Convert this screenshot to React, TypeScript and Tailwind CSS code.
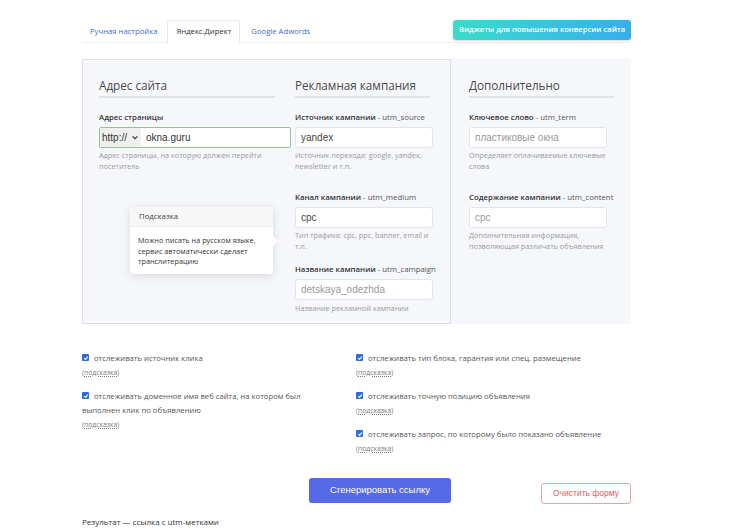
import React from "react";

const Check = () => (
  <span className="inline-flex items-center justify-center w-[7px] h-[7px] bg-[#2a6fdb] rounded-[1px] align-middle mr-[5px] relative -top-[1px]">
    <svg width="6" height="6" viewBox="0 0 10 10">
      <path d="M2 5.2 L4.2 7.3 L8.2 2.6" stroke="#fff" strokeWidth="1.8" fill="none" />
    </svg>
  </span>
);

const Hint = () => (
  <div className="text-[6.8px] leading-[14px] text-[#7a7a7a] mt-[1px]">
    (<span className="underline decoration-dotted">подсказка</span>)
  </div>
);

const Label = ({ b, n }: { b: string; n: string }) => (
  <div className="text-[7.8px] leading-[12px] text-[#333] whitespace-nowrap">
    <span className="font-semibold">{b}</span>
    <span className="text-[#555]"> - {n}</span>
  </div>
);

const Input = ({ v, ph }: { v: string; ph?: boolean }) => (
  <div
    className={`mt-[4px] h-[21px] w-[138px] bg-white border border-[#e3e4ee] rounded-[3px] flex items-center px-[5px] text-[10px] ${
      ph ? "text-[#9a9a9a]" : "text-[#444]"
    }`}
    style={{ fontFamily: '"Liberation Sans", Arial, sans-serif' }}
  >
    {v}
  </div>
);

const Help = ({ children, mt = "mt-[2px]" }: { children: React.ReactNode; mt?: string }) => (
  <div className={`${mt} text-[7.3px] leading-[11px] text-[#9a9a9a]`}>{children}</div>
);

const Heading = ({ t, w }: { t: string; w: string }) => (
  <div className={`h-[22px] ${w} border-b-2 border-[#e2e3e8] text-[11.7px] leading-[18px] text-[#4a4a4a]`}>{t}</div>
);

export default function App() {
  return (
    <div
      className="w-[730px] h-[530px] bg-white overflow-hidden"
      style={{ fontFamily: '"Open Sans", "Noto Sans", sans-serif' }}
    >
      <div className="ml-[82px] w-[549px] pt-[20px]">
        {/* Tabs */}
        <div className="flex items-start justify-between border-b border-[#efefef] h-[23px]">
          <div className="flex">
            <div className="h-[23px] pl-[8px] pr-[10px] flex items-center text-[7.7px] text-[#3f6bd0]">Ручная настройка</div>
            <div className="h-[24px] px-[8px] flex items-center text-[7.7px] text-[#333] bg-white border border-[#e8e8e8] border-b-white rounded-t-[2px]">
              Яндекс.Директ
            </div>
            <div className="h-[23px] pl-[11px] pr-[8px] flex items-center text-[7.7px] text-[#3f6bd0]">Google Adwords</div>
          </div>
          <div className="w-[178px] h-[20px] rounded-[3px] bg-gradient-to-r from-[#3ddbc9] to-[#38aeee] shadow-[0_1px_2px_rgba(0,0,0,0.15)] flex items-center justify-center text-white text-[7.6px] font-semibold whitespace-nowrap">
            Виджеты для повышения конверсии сайта
          </div>
        </div>

        {/* Panel */}
        <div className="mt-[16px] flex h-[265px]">
          <div className="relative w-[369px] h-full border border-[#dcdcec] bg-[#f6f7fb] pl-[16px] pt-[16px] flex">
            <div className="w-[192px]">
              <Heading t="Адрес сайта" w="w-[176px]" />
              <div className="mt-[13px]">
                <div className="text-[7.8px] leading-[12px] text-[#333] font-semibold">Адрес страницы</div>
              </div>
              <div
                className="mt-[4px] h-[21px] w-[192px] bg-white border border-[#8fc58f] rounded-[2px] flex items-center text-[10px] text-[#333]"
                style={{ fontFamily: '"Liberation Sans", Arial, sans-serif' }}
              >
                <div className="h-full w-[41px] bg-[#efefef] flex items-center pl-[2px] text-[#333]">
                  http://
                  <svg className="ml-[5px]" width="6" height="5" viewBox="0 0 10 7">
                    <path d="M1 1.5 L5 5.5 L9 1.5" stroke="#333" strokeWidth="2" fill="none" />
                  </svg>
                </div>
                <div className="pl-[5px]">okna.guru</div>
              </div>
              <Help>
                Адрес страницы, на которую должен перейти
                <br />
                посетитель
              </Help>
            </div>
            <div className="ml-[4px] w-[138px]">
              <Heading t="Рекламная кампания" w="w-[135px]" />
              <div className="mt-[13px]">
                <Label b="Источник кампании" n="utm_source" />
              </div>
              <Input v="yandex" />
              <Help>
                Источник перехода: google, yandex,
                <br />
                newsletter и т.п.
              </Help>
              <div className="mt-[19px]">
                <Label b="Канал кампании" n="utm_medium" />
              </div>
              <Input v="cpc" />
              <Help mt="mt-[2px]">
                Тип трафика: cpc, ppc, banner, email и
                <br />
                т.п.
              </Help>
              <div className="mt-[11px]">
                <Label b="Название кампании" n="utm_campaign" />
              </div>
              <Input v="detskaya_odezhda" ph />
              <Help mt="mt-[3px]">Название рекламной кампании</Help>
            </div>

            {/* Tooltip */}
            <div className="absolute left-[47px] top-[147px] w-[143px] bg-white rounded-[3px] shadow-[0_2px_10px_rgba(0,0,0,0.13)]">
              <div className="h-[20px] bg-[#f7f7f7] border-b border-[#ececec] rounded-t-[3px] px-[9px] flex items-center text-[7.8px] text-[#444]">
                Подсказка
              </div>
              <div className="px-[8px] pt-[8px] pb-[7px] text-[7.3px] leading-[10.5px] text-[#333]">
                Можно писать на русском языке,
                <br />
                сервис автоматически сделает
                <br />
                транслитерацию
              </div>
              <div className="absolute -right-[5px] top-[29px] w-0 h-0 border-y-[5px] border-y-transparent border-l-[5px] border-l-white" />
            </div>
          </div>

          <div className="w-[180px] h-full bg-[#f6f7fb] pl-[18px] pt-[17px]">
            <Heading t="Дополнительно" w="w-[145px]" />
            <div className="mt-[13px]">
              <Label b="Ключевое слово" n="utm_term" />
            </div>
            <Input v="пластиковые окна" ph />
            <Help>
              Определяет оплачиваемые ключевые
              <br />
              слова
            </Help>
            <div className="mt-[19px]">
              <Label b="Содержание кампании" n="utm_content" />
            </div>
            <Input v="cpc" ph />
            <Help>
              Дополнительная информация,
              <br />
              позволяющая различать объявления
            </Help>
          </div>
        </div>

        {/* Checkboxes */}
        <div className="mt-[27px] flex text-[7.7px] leading-[14px] text-[#555]">
          <div className="w-[274px]">
            <div>
              <div>
                <Check />
                отслеживать источник клика
              </div>
              <Hint />
            </div>
            <div className="mt-[9px] w-[232px]">
              <div>
                <Check />
                отслеживать доменное имя веб сайта, на котором был выполнен клик по объявлению
              </div>
              <Hint />
            </div>
          </div>
          <div>
            <div>
              <div>
                <Check />
                отслеживать тип блока, гарантия или спец. размещение
              </div>
              <Hint />
            </div>
            <div className="mt-[9px]">
              <div>
                <Check />
                отслеживать точную позицию объявления
              </div>
              <Hint />
            </div>
            <div className="mt-[9px]">
              <div>
                <Check />
                отслеживать запрос, по которому было показано объявление
              </div>
              <Hint />
            </div>
          </div>
        </div>

        {/* Buttons */}
        <div className="mt-[22px] flex items-end" style={{ fontFamily: '"Liberation Sans", Arial, sans-serif' }}>
          <div className="ml-[227px] w-[142px] h-[25px] rounded-[3px] bg-[#5669e6] text-white text-[9.5px] flex items-center justify-center">
            Сгенерировать ссылку
          </div>
          <div className="ml-auto w-[90px] h-[21px] -mb-[1px] rounded-[3px] bg-white border border-[#eaa3a3] text-[#e06262] text-[8.5px] flex items-center justify-center">
            Очистить форму
          </div>
        </div>

        <div className="mt-[13px] text-[8px] leading-[12px] text-[#333]">Результат — ссылка с utm-метками</div>
      </div>
    </div>
  );
}
